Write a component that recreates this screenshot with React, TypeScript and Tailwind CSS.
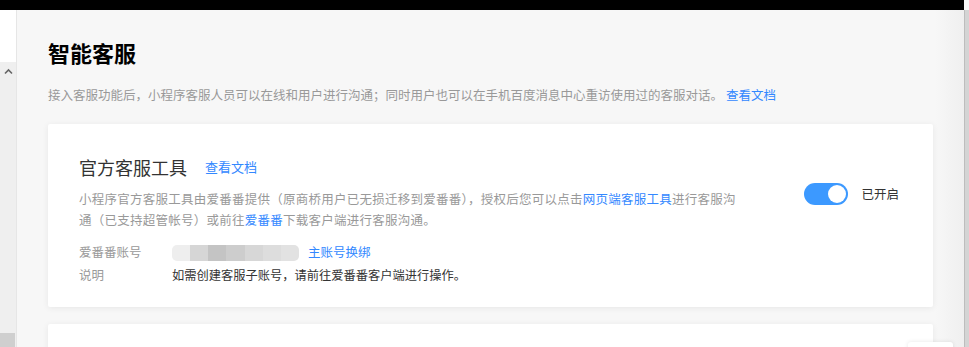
import React from 'react';

const BLUR = ['#eeeeee', '#d6d6d6', '#c4c4c4', '#cdcdcd', '#d7d7d7', '#dddddd', '#e2e2e2'];

function Toggle({ on }: { on: boolean }) {
  return (
    <div className={`w-[44px] h-[22px] rounded-full p-[2px] flex ${on ? 'bg-[#3c99ff] justify-end' : 'bg-[#ccc] justify-start'}`}>
      <div className="w-[18px] h-[18px] rounded-full bg-white" />
    </div>
  );
}

function InfoRow({ label, children }: { label: string; children: React.ReactNode }) {
  return (
    <div className="flex items-center h-[23px]">
      <span className="w-[93px] text-[12.5px] text-[#999]">{label}</span>
      {children}
    </div>
  );
}

export default function App() {
  return (
    <div className="w-[969px] h-[347px] overflow-hidden flex flex-col bg-[#f7f7f7] relative" style={{ fontFamily: '"Noto Sans CJK SC", "Noto Sans", sans-serif' }}>
      <div className="h-[10px] bg-black shrink-0 mr-[5px]" />
      <div className="flex flex-1 min-h-0">
        {/* left rail */}
        <div className="w-[17px] shrink-0 flex flex-col border-r border-[#e6e6e6]">
          <div className="h-[52px] bg-white" />
          <div className="flex-1 bg-[#efefef] flex flex-col">
            <svg className="mt-[6px] ml-[4px]" width="9" height="7" viewBox="0 0 9 7">
              <path d="M1 5.5 L4.5 2 L8 5.5" fill="none" stroke="#666" strokeWidth="1.6" />
            </svg>
            <div className="mt-auto h-[14px] w-[15px] bg-[#cfcfcf]" />
          </div>
        </div>

        {/* main */}
        <div className="flex-1 px-[31px] pt-[27px] bg-[linear-gradient(to_right,#f7f7f7_97%,#efefef)]">
          <h1 className="text-[22px] leading-[30px] font-bold text-black">智能客服</h1>
          <p className="mt-[18px] text-[12.5px] leading-[20px] text-[#999]">
            接入客服功能后，小程序客服人员可以在线和用户进行沟通；同时用户也可以在手机百度消息中心重访使用过的客服对话。
            <span className="ml-[3px] text-[#3388ff]">查看文档</span>
          </p>

          <div className="mt-[19px] bg-white rounded-[2px] shadow-[0_1px_6px_rgba(0,0,0,0.07)] flex pl-[31px] pr-[34px] pt-[30px] pb-[20px]">
            <div className="flex-1">
              <div className="flex items-center h-[26px]">
                <span className="text-[18px] text-[#333]">官方客服工具</span>
                <span className="ml-[18px] text-[13px] text-[#3388ff]">查看文档</span>
              </div>
              <p className="mt-[8px] w-[668px] text-[12.5px] tracking-[0.25px] leading-[21px] text-[#999]">
                小程序官方客服工具由爱番番提供（原商桥用户已无损迁移到爱番番），授权后您可以点击
                <span className="text-[#3388ff]">网页端客服工具</span>
                进行客服沟通（已支持超管帐号）或前往
                <span className="text-[#3388ff]">爱番番</span>
                下载客户端进行客服沟通。
              </p>
              <div className="mt-[11px]">
                <InfoRow label="爱番番账号">
                  <div className="flex w-[127px] h-[16px] rounded-[5px] overflow-hidden">
                    {BLUR.map((c, i) => (
                      <div key={i} className="flex-1" style={{ background: c }} />
                    ))}
                  </div>
                  <span className="ml-[9px] text-[#3388ff] text-[12.5px]">主账号换绑</span>
                </InfoRow>
                <InfoRow label="说明">
                  <span className="text-[12.25px] text-[#333]">如需创建客服子账号，请前往爱番番客户端进行操作。</span>
                </InfoRow>
              </div>
            </div>
            <div className="flex items-center mt-[29px] self-start h-[22px]">
              <Toggle on />
              <span className="ml-[13px] text-[12.5px] text-[#333]">已开启</span>
            </div>
          </div>

          <div className="mt-[17px] h-[60px] bg-white rounded-[2px] shadow-[0_1px_6px_rgba(0,0,0,0.07)]" />
        </div>

        {/* right scrollbar */}
        <div className="w-[5px] shrink-0 border-l border-[#bdbdbd] bg-[#d4d4d4]" />
      </div>

      <div className="absolute left-[908px] top-[342px] w-[45px] h-[20px] bg-white rounded-[3px] shadow-[0_0_4px_rgba(0,0,0,0.1)]" />
    </div>
  );
}
